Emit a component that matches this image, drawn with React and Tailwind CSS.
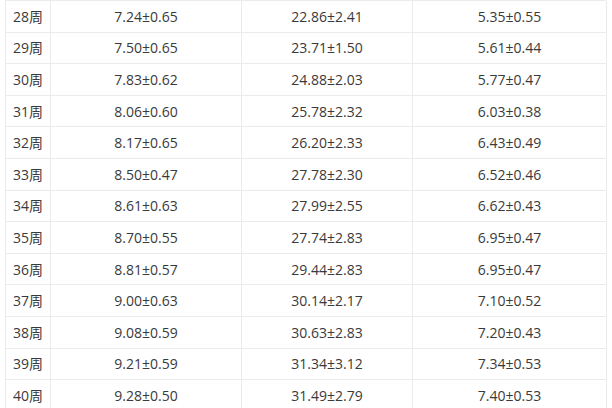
import React from "react";

const rows = [
  ["28周", "7.24±0.65", "22.86±2.41", "5.35±0.55"],
  ["29周", "7.50±0.65", "23.71±1.50", "5.61±0.44"],
  ["30周", "7.83±0.62", "24.88±2.03", "5.77±0.47"],
  ["31周", "8.06±0.60", "25.78±2.32", "6.03±0.38"],
  ["32周", "8.17±0.65", "26.20±2.33", "6.43±0.49"],
  ["33周", "8.50±0.47", "27.78±2.30", "6.52±0.46"],
  ["34周", "8.61±0.63", "27.99±2.55", "6.62±0.43"],
  ["35周", "8.70±0.55", "27.74±2.83", "6.95±0.47"],
  ["36周", "8.81±0.57", "29.44±2.83", "6.95±0.47"],
  ["37周", "9.00±0.63", "30.14±2.17", "7.10±0.52"],
  ["38周", "9.08±0.59", "30.63±2.83", "7.20±0.43"],
  ["39周", "9.21±0.59", "31.34±3.12", "7.34±0.53"],
  ["40周", "9.28±0.50", "31.49±2.79", "7.40±0.53"],
];

export default function App() {
  return (
    <div className="w-[612px] h-[408px] overflow-hidden bg-white">
      <div
        className="ml-[5px] w-[601px] grid grid-cols-[45px_191px_171px_194px] border-t border-l border-[#ebebeb] text-[#3a3a3a] text-[14px]"
        style={{ fontFamily: '"Open Sans", "Noto Sans CJK SC", sans-serif' }}
      >
        {rows.map((r, i) =>
          r.map((c, j) => (
            <div
              key={i + "-" + j}
              className="h-[31.6px] flex items-center justify-center border-r border-b border-[#ebebeb]"
            >
              {c}
            </div>
          ))
        )}
      </div>
    </div>
  );
}
